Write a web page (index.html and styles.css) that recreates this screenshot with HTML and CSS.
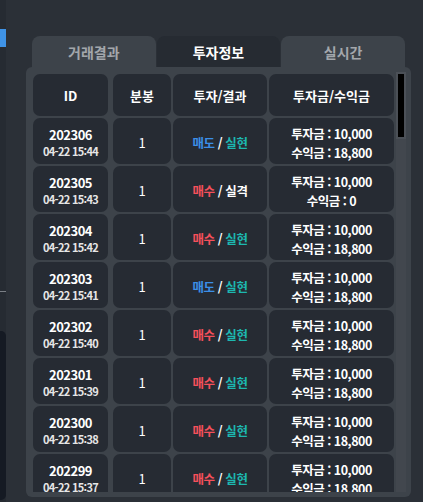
FILE: index.html
```html
<!DOCTYPE html>
<html lang="ko">
<head>
    <meta charset="UTF-8">
    <meta name="viewport" content="width=device-width, initial-scale=1.0">
    <title>투자정보</title>
    <link rel="stylesheet" href="styles.css">
</head>
<body>

    <div class="side">
        <div class="side-active"></div>
        <div class="side-line"></div>
        <div class="side-box"></div>
    </div>

    <div class="main">
        <div class="tabs">
            <div class="tab">거래결과</div>
            <div class="tab active">투자정보</div>
            <div class="tab">실시간</div>
        </div>

        <div class="panel">
            <div class="list">
                <div class="grid">
                    <div class="cell head first">ID</div>
                    <div class="cell head">분봉</div>
                    <div class="cell head">투자/결과</div>
                    <div class="cell head">투자금/수익금</div>

                    <div class="cell first"><b class="rid">202306</b><span class="rtime">04-22 15:44</span></div>
                    <div class="cell num">1</div>
                    <div class="cell res"><span><span class="sell">매도</span> / <span class="win">실현</span></span></div>
                    <div class="cell money"><span>투자금 : 10,000</span><span>수익금 : 18,800</span></div>

                    <div class="cell first"><b class="rid">202305</b><span class="rtime">04-22 15:43</span></div>
                    <div class="cell num">1</div>
                    <div class="cell res"><span><span class="buy">매수</span> / <span class="lose">실격</span></span></div>
                    <div class="cell money"><span>투자금 : 10,000</span><span>수익금 : 0</span></div>

                    <div class="cell first"><b class="rid">202304</b><span class="rtime">04-22 15:42</span></div>
                    <div class="cell num">1</div>
                    <div class="cell res"><span><span class="buy">매수</span> / <span class="win">실현</span></span></div>
                    <div class="cell money"><span>투자금 : 10,000</span><span>수익금 : 18,800</span></div>

                    <div class="cell first"><b class="rid">202303</b><span class="rtime">04-22 15:41</span></div>
                    <div class="cell num">1</div>
                    <div class="cell res"><span><span class="sell">매도</span> / <span class="win">실현</span></span></div>
                    <div class="cell money"><span>투자금 : 10,000</span><span>수익금 : 18,800</span></div>

                    <div class="cell first"><b class="rid">202302</b><span class="rtime">04-22 15:40</span></div>
                    <div class="cell num">1</div>
                    <div class="cell res"><span><span class="buy">매수</span> / <span class="win">실현</span></span></div>
                    <div class="cell money"><span>투자금 : 10,000</span><span>수익금 : 18,800</span></div>

                    <div class="cell first"><b class="rid">202301</b><span class="rtime">04-22 15:39</span></div>
                    <div class="cell num">1</div>
                    <div class="cell res"><span><span class="buy">매수</span> / <span class="win">실현</span></span></div>
                    <div class="cell money"><span>투자금 : 10,000</span><span>수익금 : 18,800</span></div>

                    <div class="cell first"><b class="rid">202300</b><span class="rtime">04-22 15:38</span></div>
                    <div class="cell num">1</div>
                    <div class="cell res"><span><span class="buy">매수</span> / <span class="win">실현</span></span></div>
                    <div class="cell money"><span>투자금 : 10,000</span><span>수익금 : 18,800</span></div>

                    <div class="cell first"><b class="rid">202299</b><span class="rtime">04-22 15:37</span></div>
                    <div class="cell num">1</div>
                    <div class="cell res"><span><span class="buy">매수</span> / <span class="win">실현</span></span></div>
                    <div class="cell money"><span>투자금 : 10,000</span><span>수익금 : 18,800</span></div>
                </div>
            </div>
            <div class="scrollbar">
                <div class="thumb"></div>
            </div>
        </div>
    </div>

</body>
</html>
```

FILE: styles.css
```css
body {
    font-family: "Noto Sans CJK KR", "Noto Sans", sans-serif;
    background: #2b3037;
    color: white;
    margin: 0;
    padding: 0;
    height: 502px;
    display: flex;
    overflow: hidden;
}
.side {
    width: 6px;
    background: #262b32;
    display: flex;
    flex-direction: column;
}
.side-active {
    height: 18px;
    margin-top: 29px;
    background: #3f93e6;
}
.side-line {
    height: 1px;
    margin-top: 244px;
    background: #7a7f85;
}
.side-box {
    flex: 1;
    margin-top: 39px;
    margin-bottom: 2px;
    background: #151a23;
    border-radius: 0 5px 5px 0;
}
.main {
    width: 385px;
    margin-left: 20px;
    padding-top: 36px;
}
.tabs {
    display: flex;
    gap: 1px;
    padding: 0 6px;
    height: 31px;
}
.tab {
    flex: 1;
    background: #3d434a;
    color: #a3a7ac;
    border-radius: 8px 8px 0 0;
    font-size: 14px;
    font-weight: bold;
    display: flex;
    justify-content: center;
    align-items: center;
}
.tab.active {
    background: #262b32;
    color: white;
}
.panel {
    background: #3d434a;
    border-radius: 6px;
    padding: 5px;
    height: 420px;
    display: flex;
    gap: 2px;
}
.list {
    height: 420px;
    overflow: hidden;
}
.scrollbar {
    width: 10px;
    background: #42474e;
}
.thumb {
    height: 63px;
    background: black;
    border: 2px solid #4b5057;
}
.grid {
    display: grid;
    grid-template-columns: 78px 58px 94px 125px;
    column-gap: 2px;
    row-gap: 2px;
    padding: 2px 0 2px 2px;
}
.cell {
    background: #262b33;
    border-radius: 7px;
    height: 46px;
    box-sizing: border-box;
    padding-top: 3px;
    display: flex;
    flex-direction: column;
    justify-content: center;
    align-items: center;
    font-size: 12px;
    line-height: 17px;
}
.cell.first {
    margin-right: 3px;
}
.cell.head {
    height: 42px;
    padding-top: 1px;
    font-size: 13px;
    font-weight: bold;
}
.rid {
    font-size: 13px;
    letter-spacing: -0.5px;
}
.rtime {
    font-size: 11px;
    font-weight: bold;
    letter-spacing: -0.7px;
    color: #e6e6e6;
}
.num {
    font-size: 13px;
}
.res {
    font-size: 12.5px;
    font-weight: bold;
    letter-spacing: -0.4px;
}
.money {
    line-height: 19px;
    font-size: 12.5px;
    font-weight: bold;
    letter-spacing: -0.5px;
}
.sell {
    color: #3b8fe8;
}
.buy {
    color: #f5505b;
}
.win {
    color: #1db8b0;
}
.lose {
    color: white;
}
```
